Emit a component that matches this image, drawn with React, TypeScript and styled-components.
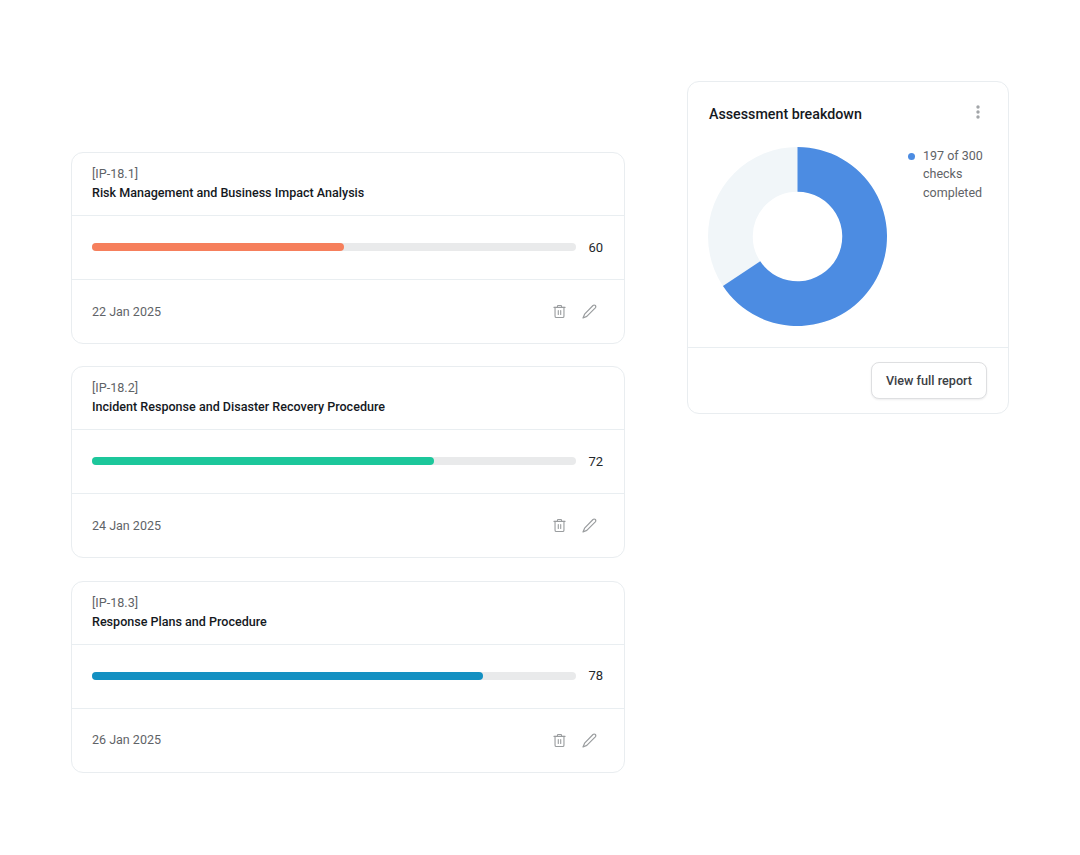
import styled, { createGlobalStyle } from 'styled-components'

const GlobalStyle = createGlobalStyle`
  html,
  body {
    margin: 0;
    padding: 0;
    background: #fff;
    font-family: Roboto, "Liberation Sans", sans-serif;
  }

  * {
    box-sizing: border-box;
  }
`

const Page = styled.div`
  align-items: flex-start;
  display: flex;
  gap: 62px;
  height: 855px;
  padding: 81px 0 0 71px;
  width: 1080px;
`

const List = styled.div`
  display: flex;
  flex-direction: column;
  gap: 22.4px;
  padding-top: 71px;
  width: 554px;
`

const Card = styled.section`
  background: #fff;
  border: 1px solid #e9edf0;
  border-radius: 12px;
  overflow: hidden;
`

const CardHead = styled.header`
  border-bottom: 1px solid #e9eef1;
  height: 63px;
  padding: 11px 20px 0;
`

const Code = styled.div`
  color: #5f6367;
  font-size: 12.6px;
  line-height: 19px;
`

const Title = styled.h3`
  color: #15191e;
  font-size: 12.55px;
  font-weight: 500;
  line-height: 19px;
  margin: 0;
`

const Progress = styled.div`
  align-items: center;
  border-bottom: 1px solid #e9eef1;
  display: flex;
  gap: 12px;
  height: 64px;
  padding: 0 21px 1px 20px;
`

const Track = styled.div`
  background: #e9eaeb;
  border-radius: 4px;
  flex: 1;
  height: 8px;
`

const Fill = styled.div<{ $color: string }>`
  background: ${(p) => p.$color};
  border-radius: 4px;
  height: 100%;
`

const Score = styled.span`
  color: #24282c;
  font-size: 13px;
`

const CardFoot = styled.footer`
  align-items: center;
  display: flex;
  height: 63px;
  justify-content: space-between;
  padding: 0 27px 1px 20px;
`

const DateText = styled.span`
  color: #5f6367;
  font-size: 12.5px;
`

const Actions = styled.div`
  align-items: center;
  color: #9a9d9f;
  display: flex;
  gap: 16px;
  padding-top: 1px;
`

const Breakdown = styled(Card)`
  width: 322px;
`

const BreakdownHead = styled.header`
  align-items: center;
  display: flex;
  justify-content: space-between;
  padding: 22px 28px 0 21px;
`

const BreakdownTitle = styled.h2`
  color: #15191e;
  font-size: 14.25px;
  font-weight: 500;
  line-height: 21px;
  margin: 0;
`

const BreakdownBody = styled.div`
  display: flex;
  gap: 21px;
  height: 223px;
  padding: 22px 0 0 20px;
  border-bottom: 1px solid #e9eef1;
`

const Legend = styled.div`
  color: #5f6367;
  display: flex;
  font-size: 12.5px;
  gap: 8px;
  line-height: 18.3px;
`

const LegendDot = styled.span`
  background: #4c8ce2;
  border-radius: 50%;
  flex: none;
  height: 7px;
  margin-top: 6px;
  width: 7px;
`

const BreakdownFoot = styled.footer`
  display: flex;
  height: 65px;
  justify-content: flex-end;
  padding: 14px 21px 0 0;
`

const ReportButton = styled.button`
  background: #fff;
  border: 1px solid #dedfe1;
  border-radius: 8px;
  box-shadow: 0 1px 2px rgba(20, 30, 40, 0.08);
  color: #3c4045;
  font-family: inherit;
  font-size: 12.65px;
  font-weight: 500;
  height: 37px;
  padding: 0;
  width: 116px;
`

const MoreSvg = styled.svg`
  margin-bottom: 5px;
`

const TrashIcon = () => (
  <svg width="13" height="15" viewBox="0 0 14 15" fill="none" stroke="currentColor" strokeWidth="1.2" strokeLinecap="round" strokeLinejoin="round">
    <path d="M1 3h12" />
    <path d="M4.8 3V1.8c0-.5.3-.8.8-.8h2.8c.5 0 .8.3.8.8V3" />
    <path d="M2.2 3v9.6c0 .9.6 1.4 1.4 1.4h6.8c.8 0 1.4-.5 1.4-1.4V3" />
    <path d="M5.7 6.5v4.2M8.3 6.5v4.2" />
  </svg>
)

const PencilIcon = () => (
  <svg width="15" height="15" viewBox="0 0 15 15" fill="none" stroke="currentColor" strokeWidth="1.2" strokeLinecap="round" strokeLinejoin="round">
    <path d="M11 1.5c.7-.7 1.7-.7 2.3 0 .6.7.6 1.6 0 2.3L4.8 12.4 1 14l1.6-3.8z" />
  </svg>
)

const MoreIcon = () => (
  <MoreSvg width="4" height="14" viewBox="0 0 4 14" fill="#a2a5a8">
    <circle cx="2" cy="2" r="1.7" />
    <circle cx="2" cy="7" r="1.7" />
    <circle cx="2" cy="12" r="1.7" />
  </MoreSvg>
)

const polar = (r: number, deg: number) => {
  const a = ((deg - 90) * Math.PI) / 180
  return `${90 + r * Math.cos(a)} ${90 + r * Math.sin(a)}`
}

const Donut = ({ done, total }: { done: number; total: number }) => {
  const end = (done / total) * 360
  const large = end > 180 ? 1 : 0
  const arc = `M${polar(90, 0)} A90 90 0 ${large} 1 ${polar(90, end)} L${polar(45, end)} A45 45 0 ${large} 0 ${polar(45, 0)} Z`
  return (
    <svg width="179" height="179" viewBox="0 0 180 180">
      <circle cx="90" cy="90" r="67.5" fill="none" stroke="#f1f6f9" strokeWidth="45" />
      <path d={arc} fill="#4c8ce2" />
    </svg>
  )
}

const items = [
  { code: '[IP-18.1]', title: 'Risk Management and Business Impact Analysis', score: 60, fill: 52.1, color: '#f67f5c', date: '22 Jan 2025' },
  { code: '[IP-18.2]', title: 'Incident Response and Disaster Recovery Procedure', score: 72, fill: 70.7, color: '#1cc79b', date: '24 Jan 2025' },
  { code: '[IP-18.3]', title: 'Response Plans and Procedure', score: 78, fill: 80.7, color: '#1390c2', date: '26 Jan 2025' },
]

const App = () => {
  return (
    <Page>
      <GlobalStyle />
      <List>
        {items.map((item) => (
          <Card key={item.code}>
            <CardHead>
              <Code>{item.code}</Code>
              <Title>{item.title}</Title>
            </CardHead>
            <Progress>
              <Track>
                <Fill $color={item.color} style={{ width: `${item.fill}%` }} />
              </Track>
              <Score>{item.score}</Score>
            </Progress>
            <CardFoot>
              <DateText>{item.date}</DateText>
              <Actions>
                <TrashIcon />
                <PencilIcon />
              </Actions>
            </CardFoot>
          </Card>
        ))}
      </List>
      <Breakdown>
        <BreakdownHead>
          <BreakdownTitle>Assessment breakdown</BreakdownTitle>
          <MoreIcon />
        </BreakdownHead>
        <BreakdownBody>
          <Donut done={197} total={300} />
          <Legend>
            <LegendDot />
            <span>
              197 of 300
              <br />
              checks
              <br />
              completed
            </span>
          </Legend>
        </BreakdownBody>
        <BreakdownFoot>
          <ReportButton>View full report</ReportButton>
        </BreakdownFoot>
      </Breakdown>
    </Page>
  )
}

export default App
